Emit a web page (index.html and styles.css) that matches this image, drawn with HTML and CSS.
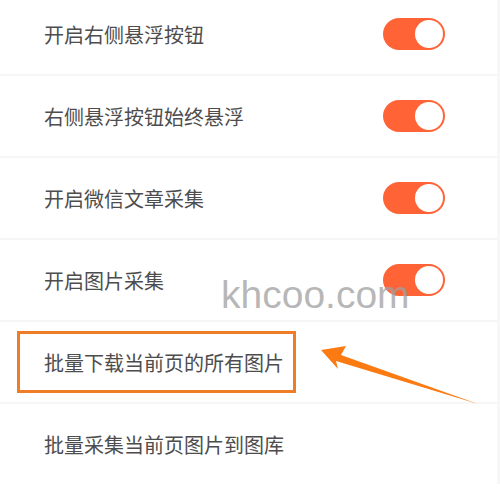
FILE: index.html
```html
<!DOCTYPE html>
<html lang="zh-CN">
<head>
    <meta charset="UTF-8">
    <meta name="viewport" content="width=device-width, initial-scale=1.0">
    <title>采集设置</title>
    <link rel="stylesheet" href="styles.css">
</head>
<body>
    <div class="settings">
        <div class="row">
            <span class="label">开启右侧悬浮按钮</span>
            <span class="switch on"><span class="knob"></span></span>
        </div>
        <div class="row">
            <span class="label">右侧悬浮按钮始终悬浮</span>
            <span class="switch on"><span class="knob"></span></span>
        </div>
        <div class="row">
            <span class="label">开启微信文章采集</span>
            <span class="switch on"><span class="knob"></span></span>
        </div>
        <div class="row">
            <span class="label">开启图片采集</span>
            <span class="switch on"><span class="knob"></span></span>
            <span class="watermark">khcoo.com</span>
        </div>
        <div class="row">
            <span class="label">批量下载当前页的所有图片</span>
            <span class="highlight"></span>
        </div>
        <div class="row">
            <span class="label">批量采集当前页图片到图库</span>
        </div>
        <!-- annotation arrow pointing at the highlighted row -->
        <svg class="arrow" width="500" height="500" viewBox="0 0 500 500">
            <polygon points="321,356 346,352 341,361 478,410 336,367 338,375" fill="#fb7a12"/>
        </svg>
    </div>
</body>
</html>
```

FILE: styles.css
```css
body {
    margin: 0;
    padding: 0;
    background-color: #ffffff;
    font-family: "Noto Sans CJK SC", "Noto Sans", sans-serif;
    overflow: hidden;
}
.settings {
    position: relative;
    margin-top: -6px;
    border-right: 3px solid #f7f7f7;
}
.row {
    position: relative;
    height: 80px;
    display: flex;
    align-items: center;
    justify-content: space-between;
    padding: 0 52px 0 44px;
    border-bottom: 2px solid #f6f6f6;
}
.row:last-of-type {
    border-bottom: none;
}
.label {
    font-size: 20px;
    color: #4d4d4d;
}
.switch {
    position: relative;
    width: 62px;
    height: 32px;
    border-radius: 16px;
    background-color: #ff6336;
}
.switch .knob {
    position: absolute;
    top: 2px;
    right: 2px;
    width: 28px;
    height: 28px;
    border-radius: 50%;
    background-color: #ffffff;
}
.watermark {
    position: absolute;
    left: 221px;
    top: 35px;
    font-family: "Liberation Sans", Arial, sans-serif;
    font-size: 39px;
    color: rgba(160, 160, 160, 0.75);
    line-height: 1;
}
.highlight {
    position: absolute;
    left: 17px;
    top: 9px;
    width: 273px;
    height: 56px;
    border: 3px solid #ef7d28;
}
.arrow {
    position: absolute;
    left: 0;
    top: 0;
}
```
